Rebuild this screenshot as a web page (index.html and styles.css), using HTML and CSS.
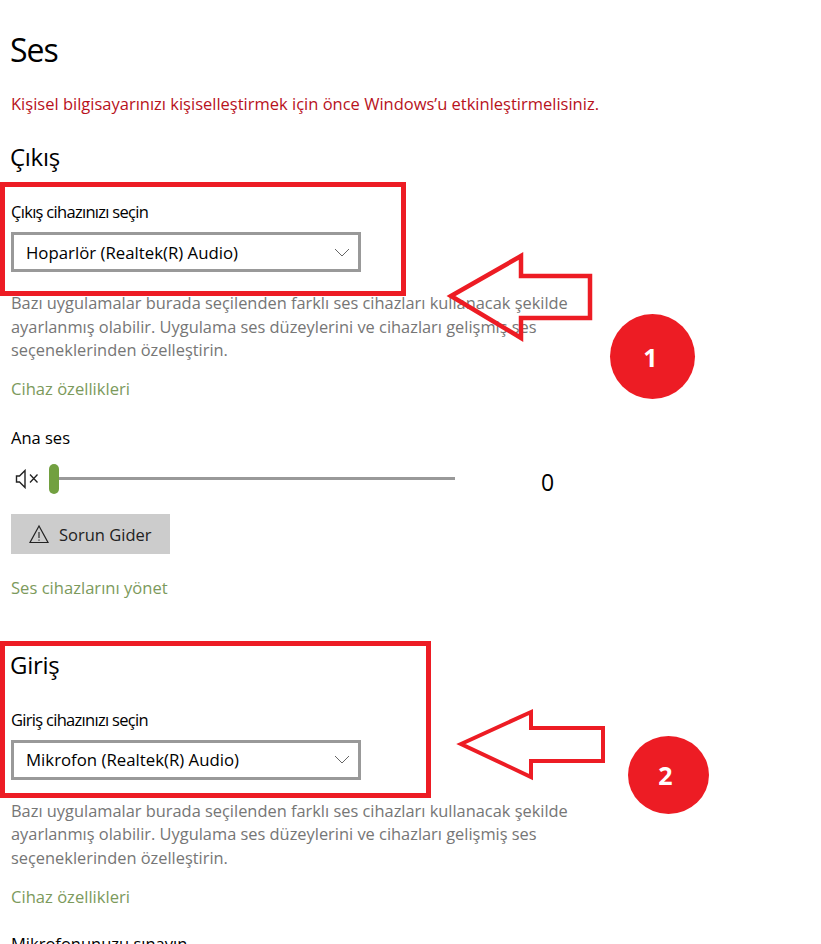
FILE: index.html

```html
<!DOCTYPE html>
<html lang="tr">
<head>
    <meta charset="UTF-8">
    <meta name="viewport" content="width=device-width, initial-scale=1.0">
    <title>Ses</title>
    <link rel="stylesheet" href="styles.css">
</head>
<body>
    <main class="settings">
        <h1 class="page-title">Ses</h1>
        <p class="activation-note">Kişisel bilgisayarınızı kişiselleştirmek için önce Windows’u etkinleştirmelisiniz.</p>

        <section class="output-section">
            <h2 class="section-title">Çıkış</h2>
            <p class="field-label device-label">Çıkış cihazınızı seçin</p>
            <div class="dropdown">
                <span>Hoparlör (Realtek(R) Audio)</span>
                <svg class="chevron" width="16" height="9" viewBox="0 0 16 9"><path d="M1 1l7 7 7-7" fill="none" stroke="#666" stroke-width="1"/></svg>
            </div>
            <p class="description">Bazı uygulamalar burada seçilenden farklı ses cihazları kullanacak şekilde ayarlanmış olabilir. Uygulama ses düzeylerini ve cihazları gelişmiş ses seçeneklerinden özelleştirin.</p>
            <a class="link link-device">Cihaz özellikleri</a>

            <p class="field-label volume-label">Ana ses</p>
            <div class="volume-row">
                <svg class="mute-icon" width="24" height="20" viewBox="0 0 24 20"><path d="M1.500 7h3l5.500-5.500v17L4.500 13h-3z" fill="none" stroke="#222" stroke-width="1.400"/><path d="M15 5.500l7.500 8m0-8l-7.500 8" fill="none" stroke="#222" stroke-width="1.300"/></svg>
                <div class="slider">
                    <div class="slider-thumb"></div>
                    <div class="slider-track"></div>
                </div>
                <span class="volume-value">0</span>
            </div>
            <button class="trouble-button">
                <svg width="20" height="20" viewBox="0 0 20 20"><path d="M10 2L1 18.500h18z" fill="none" stroke="#222" stroke-width="1.200"/><path d="M10 8v6m0 1.500v1.200" fill="none" stroke="#222" stroke-width="1.100"/></svg>
                <span class="button-text">Sorun Gider</span>
            </button>
            <a class="link link-manage">Ses cihazlarını yönet</a>
        </section>

        <section class="input-section">
            <h2 class="section-title">Giriş</h2>
            <p class="field-label device-label input-label">Giriş cihazınızı seçin</p>
            <div class="dropdown">
                <span>Mikrofon (Realtek(R) Audio)</span>
                <svg class="chevron" width="16" height="9" viewBox="0 0 16 9"><path d="M1 1l7 7 7-7" fill="none" stroke="#666" stroke-width="1"/></svg>
            </div>
            <p class="description">Bazı uygulamalar burada seçilenden farklı ses cihazları kullanacak şekilde ayarlanmış olabilir. Uygulama ses düzeylerini ve cihazları gelişmiş ses seçeneklerinden özelleştirin.</p>
            <a class="link link-device">Cihaz özellikleri</a>
            <p class="field-label test-label">Mikrofonunuzu sınayın</p>
        </section>
    </main>

    <!-- red annotations drawn on top of the screenshot -->
    <div class="mark-box mark-box-1"></div>
    <div class="mark-box mark-box-2"></div>
    <svg class="mark-arrows" width="821" height="944" viewBox="0 0 821 944">
        <path d="M451 296L521 256V276H590V318H521V338z" fill="none" stroke="#ed1c24" stroke-width="4.500"/>
        <path d="M461 744L531 712V728H603V761H531V777z" fill="none" stroke="#ed1c24" stroke-width="4"/>
    </svg>
    <div class="mark-badge mark-badge-1">1</div>
    <div class="mark-badge mark-badge-2">2</div>
</body>
</html>
```

FILE: styles.css

```css
html, body {
    height: 944px;
    overflow: hidden;
}
body {
    margin: 0;
    background-color: #fff;
    color: #000;
    font-family: "Open Sans", "Noto Sans", sans-serif;
    position: relative;
}
p, h1, h2 {
    margin: 0;
    font-weight: 400;
}
.settings {
    padding: 28px 0 0 11px;
}
.page-title {
    font-size: 32px;
    line-height: 44px;
    margin-left: -1px;
    letter-spacing: -1px;
}
.activation-note {
    font-size: 16.500px;
    line-height: 24px;
    margin-top: 20px;
    color: #b8121c;
}
.section-title {
    font-size: 24px;
    line-height: 32px;
    margin-left: -1px;
    letter-spacing: -0.3px;
}
.output-section {
    margin-top: 25px;
}
.field-label {
    font-size: 16.500px;
    line-height: 24px;
    margin-top: 27px;
}
.device-label {
    letter-spacing: -0.7px;
}
.dropdown {
    width: 350px;
    height: 40px;
    box-sizing: border-box;
    margin-top: 8px;
    padding: 0 8px 0 12px;
    border: 3px solid #999;
    display: flex;
    align-items: center;
    justify-content: space-between;
    font-size: 16.800px;
}
.description {
    width: 570px;
    margin-top: 19px;
    font-size: 16.400px;
    line-height: 23.500px;
    color: #767676;
}
.link {
    display: block;
    font-size: 16.600px;
    line-height: 24px;
    color: #7c9a5c;
}
.link-device {
    margin-top: 15px;
}
.volume-label {
    margin-top: 25px;
}
.volume-row {
    display: flex;
    align-items: center;
    height: 30px;
    margin-top: 14px;
    margin-left: 4px;
}
.mute-icon {
    flex: none;
}
.slider {
    display: flex;
    align-items: center;
    width: 406px;
    margin-left: 10px;
}
.slider-thumb {
    width: 10px;
    height: 30px;
    border-radius: 5px;
    background-color: #72a040;
}
.slider-track {
    flex: 1;
    height: 3px;
    background-color: #999;
}
.volume-value {
    font-size: 23px;
    margin-left: 86px;
    position: relative;
    top: 3px;
}
.trouble-button {
    display: flex;
    align-items: center;
    gap: 11px;
    width: 159px;
    height: 40px;
    margin-top: 20px;
    padding: 0 0 0 18px;
    border: none;
    background-color: #ccc;
    color: #222;
    font-family: inherit;
    font-size: 16.500px;
}
.button-text {
    padding-top: 2px;
    margin-left: -1px;
}
.link-manage {
    margin-top: 22px;
}
.input-section {
    margin-top: 49px;
}
.input-label {
    margin-top: 27px;
}
.input-section .link-device {
    margin-top: 16px;
}
.test-label {
    margin-top: 23px;
}
.mark-box {
    position: absolute;
    left: 0;
    box-sizing: border-box;
    border: 5px solid #ed1c24;
}
.mark-box-1 {
    top: 182px;
    width: 406px;
    height: 114px;
}
.mark-box-2 {
    top: 641px;
    width: 431px;
    height: 157px;
}
.mark-arrows {
    position: absolute;
    left: 0;
    top: 0;
}
.mark-badge {
    position: absolute;
    display: flex;
    align-items: center;
    justify-content: center;
    border-radius: 50%;
    background-color: #ed1c24;
    color: #fff;
    font-size: 25px;
    font-weight: 700;
}
.mark-badge-1 {
    left: 610px;
    top: 314px;
    width: 85px;
    height: 85px;
    box-sizing: border-box;
    padding-right: 4px;
}
.mark-badge-2 {
    left: 628px;
    top: 736px;
    width: 81px;
    height: 78px;
    box-sizing: border-box;
    padding-right: 6px;
}
```
